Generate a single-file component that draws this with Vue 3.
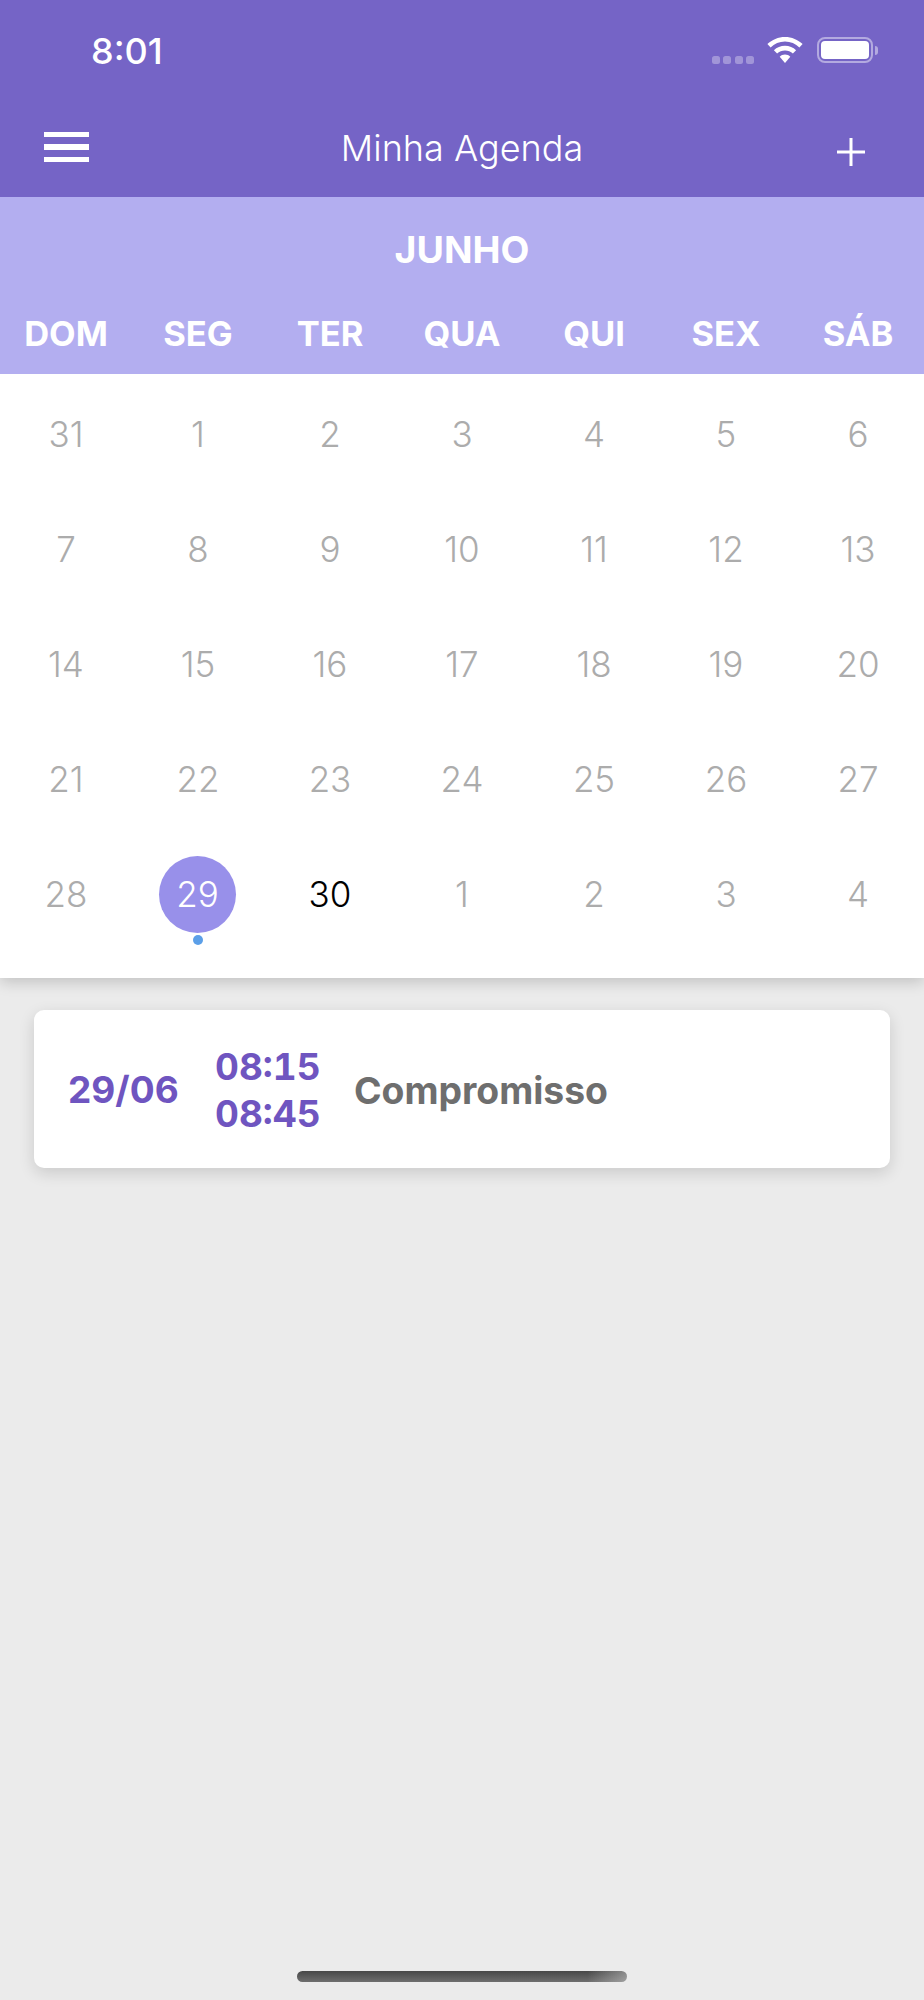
<script setup>
const weekdays = ['DOM', 'SEG', 'TER', 'QUA', 'QUI', 'SEX', 'SÁB']
const inactive = [
  31, 1, 2, 3, 4, 5, 6,
  7, 8, 9, 10, 11, 12, 13,
  14, 15, 16, 17, 18, 19, 20,
  21, 22, 23, 24, 25, 26, 27,
]
const lastRow = [
  { n: 28 },
  { n: 29, selected: true },
  { n: 30, today: true },
  { n: 1 }, { n: 2 }, { n: 3 }, { n: 4 },
]
</script>

<template>
  <div class="app">
    <header class="topbar">
      <div class="status">
        <span class="time">8:01</span>
        <div class="status-right">
          <div class="signal"><i></i><i></i><i></i><i></i></div>
          <svg class="wifi" width="36" height="26" viewBox="0 0 36 26">
            <path d="M18 0C11.2 0 5 2.7 0.4 7.1L3.6 10.4C7.4 6.8 12.4 4.6 18 4.6S28.6 6.8 32.4 10.4L35.6 7.1C31 2.7 24.8 0 18 0Z" fill="#fff"/>
            <path d="M18 8.8C13.7 8.8 9.8 10.5 6.9 13.2L10.1 16.5C12.2 14.6 15 13.4 18 13.4S23.8 14.6 25.9 16.5L29.1 13.2C26.2 10.5 22.3 8.8 18 8.8Z" fill="#fff"/>
            <path d="M18 17.6C15.9 17.6 14.1 18.4 12.7 19.7L18 26L23.3 19.7C21.9 18.4 20.1 17.6 18 17.6Z" fill="#fff"/>
          </svg>
          <div class="battery"><div class="battery-fill"></div></div>
          <div class="battery-cap"></div>
        </div>
      </div>
      <div class="navbar">
        <div class="burger"><i></i><i></i><i></i></div>
        <span class="title">Minha Agenda</span>
        <svg class="plus" width="30" height="30" viewBox="0 0 30 30">
          <path d="M15 1V29M1 15H29" stroke="#fff" stroke-width="3" fill="none"/>
        </svg>
      </div>
    </header>

    <section class="calendar-head">
      <div class="month">JUNHO</div>
      <div class="grid weekdays">
        <span v-for="d in weekdays" :key="d">{{ d }}</span>
      </div>
    </section>

    <section class="calendar-body">
      <div class="grid days">
        <div v-for="(n, i) in inactive" :key="i" class="day">{{ n }}</div>
        <div
          v-for="c in lastRow"
          :key="'l' + c.n"
          class="day"
          :class="{ today: c.today, selected: c.selected }"
        >
          <span v-if="c.selected" class="circle">{{ c.n }}</span>
          <template v-else>{{ c.n }}</template>
          <span v-if="c.selected" class="dot"></span>
        </div>
      </div>
    </section>

    <article class="card">
      <div class="date">29/06</div>
      <div class="times">
        <span>08:15</span>
        <span>08:45</span>
      </div>
      <div class="label">Compromisso</div>
    </article>

    <div class="home-wrap"><div class="home"></div></div>
  </div>
</template>

<style>
html, body { margin: 0; padding: 0; background: #ebebeb; }
</style>

<style scoped>
.app {
  width: 924px;
  height: 2000px;
  background: #ebebeb;
  display: flex;
  flex-direction: column;
  font-family: Inter, "Liberation Sans", sans-serif;
  overflow: hidden;
}
.topbar {
  height: 197px;
  background: #7564c6;
  color: #fff;
  display: flex;
  flex-direction: column;
  flex: none;
}
.status {
  height: 100px;
  display: flex;
  justify-content: space-between;
  align-items: flex-start;
  padding: 0 46px 0 91px;
  box-sizing: border-box;
}
.time {
  margin-top: 30px;
  font-size: 36px;
  line-height: 42px;
  font-weight: 500;
}
.status-right {
  display: flex;
  align-items: center;
  margin-top: 37px;
  height: 26px;
}
.signal { display: flex; gap: 3.5px; margin-right: 13px; align-self: flex-end; margin-bottom: -1px; }
.signal i {
  width: 8px;
  height: 8px;
  border-radius: 2.5px;
  background: rgba(255, 255, 255, 0.32);
}
.wifi { display: block; margin-right: 14px; }
.battery {
  width: 56px;
  height: 26px;
  box-sizing: border-box;
  border: 2px solid rgba(255, 255, 255, 0.45);
  border-radius: 8px;
  padding: 2px;
}
.battery-fill { width: 100%; height: 100%; background: #fff; border-radius: 4px; }
.battery-cap {
  width: 3px;
  height: 9px;
  margin-left: 2px;
  border-radius: 0 3px 3px 0;
  background: rgba(255, 255, 255, 0.45);
}
.navbar {
  flex: 1;
  position: relative;
  display: flex;
  align-items: center;
  justify-content: space-between;
  padding: 0 58px 0 44px;
}
.burger { display: flex; flex-direction: column; gap: 7px; width: 45px; margin-top: -3px; }
.burger i { height: 5.5px; background: #fff; display: block; }
.title {
  position: absolute;
  left: 0;
  right: 0;
  top: 26px;
  text-align: center;
  font-size: 36px;
  line-height: 44px;
  font-weight: 300;
}
.plus { display: block; margin-top: 7px; }

.calendar-head {
  height: 177px;
  background: #b3aef0;
  color: #fff;
  flex: none;
  display: flex;
  flex-direction: column;
  position: relative;
  z-index: 1;
}
.month {
  margin-top: 31px;
  text-align: center;
  font-size: 37.5px;
  line-height: 44px;
  font-weight: 700;
}
.grid { display: grid; grid-template-columns: repeat(7, 132px); }
.weekdays {
  margin-top: 42px;
  text-align: center;
  font-size: 34.5px;
  line-height: 40px;
  font-weight: 700;
}
.calendar-body {
  background: #fff;
  height: 604px;
  flex: none;
  padding-top: 2px;
  box-sizing: border-box;
  box-shadow: 0 4px 14px rgba(0, 0, 0, 0.18);
  position: relative;
}
.day {
  height: 115px;
  display: flex;
  align-items: center;
  justify-content: center;
  font-size: 35px;
  font-weight: 350;
  color: #acacac;
  position: relative;
}
.day.today { color: #000; font-weight: 350; }
.circle {
  width: 77px;
  height: 77px;
  border-radius: 50%;
  background: #9890ea;
  color: #fff;
  display: flex;
  align-items: center;
  justify-content: center;
  margin-left: -1px;
  margin-top: 1px;
}
.dot {
  position: absolute;
  left: 61px;
  top: 99px;
  width: 10px;
  height: 10px;
  border-radius: 50%;
  background: #5b9fe8;
}
.card {
  margin: 32px 34px 0;
  height: 158px;
  flex: none;
  box-sizing: border-box;
  background: #fff;
  border-radius: 10px;
  box-shadow: 0 5px 16px rgba(0, 0, 0, 0.14);
  display: flex;
  align-items: center;
  padding-left: 34px;
}
.date, .times {
  color: #6f55c0;
  font-weight: 700;
}
.date { width: 147px; margin-top: 1px; font-size: 37px; }
.times {
  width: 139px;
  display: flex;
  flex-direction: column;
  font-size: 37px;
  line-height: 47px;
  margin-top: 1px;
  font-variant-numeric: tabular-nums;
}
.label {
  color: #6e6e6e;
  font-weight: 700;
  font-size: 37.3px;
  margin-top: 2px;
}
.home-wrap {
  margin-top: auto;
  height: 29px;
  display: flex;
  justify-content: center;
  flex: none;
}
.home {
  width: 330px;
  height: 11px;
  border-radius: 6px;
  background:
    linear-gradient(90deg, transparent 88%, rgba(235, 235, 235, 0.4) 100%),
    linear-gradient(180deg, #484848, #6e6e6e);
}
</style>
